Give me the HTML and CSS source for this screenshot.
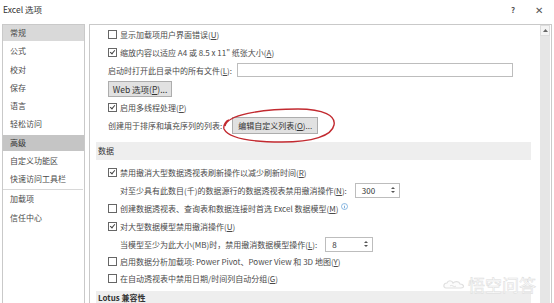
FILE: index.html
```html
<!DOCTYPE html>
<html lang="zh-CN">
<head>
  <meta charset="UTF-8" />
  <title>Excel 选项</title>
  <link rel="stylesheet" href="styles.css">
</head>
<body>

  <div class="titlebar">
    <span class="title">Excel 选项</span>
    <div class="win-btns">
      <span class="help">?</span>
      <span class="close">&#x2715;</span>
    </div>
  </div>

  <div class="main">
    <!-- left navigation -->
    <ul class="nav">
      <li class="hover">常规</li>
      <li>公式</li>
      <li>校对</li>
      <li>保存</li>
      <li>语言</li>
      <li>轻松访问</li>
      <li class="active">高级</li>
      <li>自定义功能区</li>
      <li>快速访问工具栏</li>
      <li class="sep"></li>
      <li>加载项</li>
      <li>信任中心</li>
    </ul>

    <!-- options panel -->
    <div class="panel">
      <div class="content">
        <div class="row"><span class="cb"></span>显示加载项用户界面错误(<u>U</u>)</div>
        <div class="row"><span class="cb checked"></span>缩放内容以适应 A4 或 8.5 x 11" 纸张大小(<u>A</u>)</div>
        <div class="row">启动时打开此目录中的所有文件(<u>L</u>):<span class="textbox"></span></div>
        <div class="row row-btn"><span class="btn btn-web">Web 选项(<u>P</u>)...</span></div>
        <div class="row"><span class="cb checked"></span>启用多线程处理(<u>P</u>)</div>
        <div class="row">创建用于排序和填充序列的列表:<span class="btn btn-edit">编辑自定义列表(<u>O</u>)...</span></div>

        <div class="section">数据</div>

        <div class="row first"><span class="cb checked"></span>禁用撤消大型数据透视表刷新操作以减少刷新时间(<u>R</u>)</div>
        <div class="row indent">对至少具有此数目(千)的数据源行的数据透视表禁用撤消操作(<u>N</u>):
          <span class="spin spin-300">300<svg width="4" height="8" viewBox="0 0 4 8"><path d="M0 3 L2 1 L4 3 Z M0 5 L2 7 L4 5 Z" fill="#555"/></svg></span>
        </div>
        <div class="row"><span class="cb"></span>创建数据透视表、查询表和数据连接时首选 Excel 数据模型(<u>M</u>)
          <svg class="info" width="7" height="7" viewBox="0 0 14 14"><circle cx="7" cy="7" r="6" fill="none" stroke="#5b9bd5" stroke-width="1.4"/><path d="M7 6 V10.5 M7 3.6 V4.6" stroke="#5b9bd5" stroke-width="1.6"/></svg>
        </div>
        <div class="row"><span class="cb checked"></span>对大型数据模型禁用撤消操作(<u>U</u>)</div>
        <div class="row indent">当模型至少为此大小(MB)时，禁用撤消数据模型操作(<u>L</u>):
          <span class="spin spin-8">8<svg width="4" height="8" viewBox="0 0 4 8"><path d="M0 3 L2 1 L4 3 Z M0 5 L2 7 L4 5 Z" fill="#555"/></svg></span>
        </div>
        <div class="row short"><span class="cb"></span>启用数据分析加载项: Power Pivot、Power View 和 3D 地图(<u>Y</u>)</div>
        <div class="row short"><span class="cb"></span>在自动透视表中禁用日期/时间列自动分组(<u>G</u>)</div>

        <div class="section lotus">Lotus 兼容性</div>
      </div>

      <div class="scrollbar">
        <div class="scroll-up">
          <svg width="5" height="3" viewBox="0 0 5 3"><path d="M0 3 L2.5 0 L5 3 Z" fill="#666"/></svg>
        </div>
      </div>
    </div>
  </div>

  <!-- red hand-drawn mark round the button -->
  <svg class="mark" width="118" height="40" viewBox="0 0 118 40">
    <path d="M5 20 C 7 9, 40 3, 78 3 C 104 3, 116 10, 114 19 C 112 30, 92 36, 62 36 C 32 36, 9 33, 4 23 C 3 19, 6 15, 9 14" fill="none" stroke="#c22a30" stroke-width="1.4"/>
  </svg>

  <!-- watermark -->
  <div class="watermark">
    <svg width="22" height="12" viewBox="0 0 22 12">
      <path d="M3 9 C 0 9, 0 4, 4 4 C 5 1, 9 1, 10 4 C 12 2, 16 2, 17 5 C 21 5, 22 9, 18 9 Z" fill="#fcfcfc" stroke="#e0e0e0" stroke-width="1.2"/>
      <path d="M7 7 C 9 5, 11 9, 13 7" fill="none" stroke="#e0e0e0" stroke-width="1"/>
    </svg>
    <span>悟空问答</span>
  </div>

</body>
</html>
```

FILE: styles.css
```css
/* page */
body {
  margin: 0;
  width: 554px;
  height: 303px;
  overflow: hidden;
  position: relative;
  background: #fff;
  font-family: "Noto Sans CJK SC", "Noto Sans", sans-serif;
  font-size: 8px;
  color: #4a4a4a;
}

u {
  text-decoration: underline;
  text-underline-offset: 1px;
}

/* title bar */
.titlebar {
  height: 18px;
  display: flex;
  align-items: center;
  justify-content: space-between;
  padding-left: 3px;
  margin-bottom: 6px;
}

.title {
  font-size: 8.5px;
  color: #333;
}

.win-btns {
  display: flex;
  align-items: center;
  gap: 20px;
  padding-right: 11px;
  color: #555;
}

.help {
  font-size: 8px;
  font-weight: bold;
}

.close {
  font-size: 10px;
}

/* layout */
.main {
  display: flex;
  gap: 4px;
  padding: 0 2px;
  height: 279px;
}

/* navigation */
.nav {
  width: 81px;
  height: 290px;
  margin: 0;
  padding: 0;
  list-style: none;
  border: 1px solid #c9c9c9;
}

.nav li {
  height: 16px;
  line-height: 16px;
  margin-bottom: 2.25px;
  padding-left: 7px;
  white-space: nowrap;
}

.nav .hover {
  background: #d9d9d9;
}

.nav .active {
  background: #c5c5c5;
  color: #333;
}

.nav .sep {
  height: 1px;
  margin: 0 1px 1px 0;
  padding: 0;
  background: #d8d8d8;
}

/* options panel */
.panel {
  flex: 1;
  display: flex;
  height: 290px;
  border: 1px solid #c9c9c9;
}

.content {
  flex: 1;
  padding: 0 9px 0 6px;
}

.row {
  display: flex;
  align-items: center;
  height: 18px;
  margin-left: 12px;
  white-space: nowrap;
}

.row-btn {
  height: 19px;
}

.row.first {
  margin-top: 3px;
}

.row.indent {
  padding-left: 12px;
}

.row.short {
  height: 17px;
}

/* checkbox */
.cb {
  width: 7px;
  height: 7px;
  border: 1px solid #666;
  background: #fff;
  margin-right: 3px;
  position: relative;
  flex: none;
}

.cb.checked::after {
  content: "";
  position: absolute;
  left: 2px;
  top: 0;
  width: 2px;
  height: 4px;
  border: solid #444;
  border-width: 0 1px 1px 0;
  transform: rotate(40deg);
}

/* inputs */
.textbox {
  width: 274px;
  height: 12px;
  border: 1px solid #bdbdbd;
  margin-left: 5px;
}

.btn {
  box-sizing: border-box;
  height: 16px;
  line-height: 14px;
  text-align: center;
  border: 1px solid #adadad;
  background: #e1e1e1;
  color: #333;
}

.btn-web {
  width: 64px;
  font-size: 8.5px;
}

.btn-edit {
  width: 86px;
  height: 17px;
  line-height: 15px;
  margin-left: 10px;
}

.spin {
  box-sizing: border-box;
  display: flex;
  align-items: center;
  justify-content: space-between;
  height: 15px;
  padding: 0 4px 0 6px;
  border: 1px solid #bdbdbd;
  color: #333;
}

.spin-300 {
  width: 45px;
  margin-left: 8px;
}

.spin-8 {
  width: 48px;
  margin-left: 8px;
}

.info {
  margin-left: 3px;
  margin-top: -4px;
}

/* section headers */
.section {
  height: 18px;
  line-height: 18px;
  margin-top: 8px;
  padding-left: 2px;
  background: #eeeeee;
  color: #333;
}

.section.lotus {
  margin-top: 4px;
  line-height: 14px;
  font-weight: bold;
}

/* scrollbar */
.scrollbar {
  width: 10px;
  margin-right: 1px;
  background: #e6e6e6;
}

.scroll-up {
  height: 11px;
  display: flex;
  align-items: center;
  justify-content: center;
  background: #f4f4f4;
  border: 1px solid #dcdcdc;
  box-sizing: border-box;
}

/* overlays */
.mark {
  position: absolute;
  left: 220px;
  top: 106px;
}

.watermark {
  position: absolute;
  left: 443px;
  top: 272px;
  display: flex;
  align-items: center;
  gap: 3px;
  font-size: 17px;
  color: #fcfcfc;
  -webkit-text-stroke: 0.5px #dcdcdc;
}
```
